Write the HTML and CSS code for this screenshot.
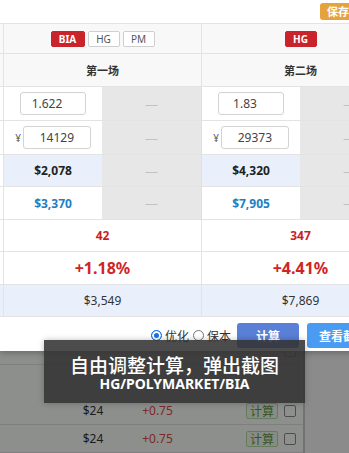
FILE: index.html
```html
<!DOCTYPE html>
<html lang="zh">
<head>
<meta charset="utf-8">
<title>计算</title>
<link rel="stylesheet" href="styles.css">
</head>
<body>
<div class="page">
  <div class="page-main">
    <div class="page-head"></div>
    <div class="prow"><span></span><span></span><span></span><span class="ops"><span class="pchk"></span></span></div>
    <div class="pgroup"></div>
    <div class="prow"><span></span><span class="amt">$24</span><span class="gain">+0.75</span><span class="ops"><span class="pbtn">计算</span><span class="pchk"></span></span></div>
    <div class="prow"><span></span><span class="amt">$24</span><span class="gain">+0.75</span><span class="ops"><span class="pbtn">计算</span><span class="pchk"></span></span></div>
  </div>
  <div class="page-side"></div>
</div>

<div class="mask"></div>

<div class="modal">
  <div class="modal-top"><span class="btn-save">保存方案</span></div>
  <div class="grid">
    <div class="c c0 head"></div>
    <div class="c span head"><div class="badges"><span class="badge on wide">BIA</span><span class="badge">HG</span><span class="badge">PM</span></div></div>
    <div class="c span head"><div class="badges"><span class="badge on">HG</span></div></div>

    <div class="c c0 head"></div>
    <div class="c span head title">第一场</div>
    <div class="c span head title">第二场</div>

    <div class="c c0"></div>
    <div class="c"><span class="inp odds">1.622</span></div>
    <div class="c dash">—</div>
    <div class="c"><span class="inp odds">1.83</span></div>
    <div class="c dash">—</div>

    <div class="c c0"></div>
    <div class="c"><span class="cur">¥</span><span class="inp stake">14129</span></div>
    <div class="c dash">—</div>
    <div class="c"><span class="cur">¥</span><span class="inp stake">29373</span></div>
    <div class="c dash">—</div>

    <div class="c c0"></div>
    <div class="c blue num">$2,078</div>
    <div class="c dash">—</div>
    <div class="c blue num">$4,320</div>
    <div class="c dash">—</div>

    <div class="c c0"></div>
    <div class="c num link">$3,370</div>
    <div class="c dash">—</div>
    <div class="c num link">$7,905</div>
    <div class="c dash">—</div>

    <div class="c c0"></div>
    <div class="c span num red">42</div>
    <div class="c span num red">347</div>

    <div class="c c0"></div>
    <div class="c span num red big">+1.18%</div>
    <div class="c span num red big">+4.41%</div>

    <div class="c c0 blue"></div>
    <div class="c span blue plain">$3,549</div>
    <div class="c span blue plain">$7,869</div>
  </div>
  <div class="foot">
    <div class="opts">
      <span class="opt"><span class="radio on"></span>优化</span>
      <span class="opt"><span class="radio"></span>保本</span>
    </div>
    <span class="btn calc">计算</span>
    <span class="btn view">查看截图</span>
  </div>
</div>

<div class="caption">
  <div class="cap1">自由调整计算，弹出截图</div>
  <div class="cap2">HG/POLYMARKET/BIA</div>
</div>
</body>
</html>
```

FILE: styles.css
```css
* { box-sizing: border-box; margin: 0; padding: 0; }
html, body { width: 349px; height: 453px; overflow: hidden; }
body {
  position: relative;
  font-family: "Noto Sans", "Noto Sans CJK SC", sans-serif;
  color: #333;
  background: #f8f8f8;
}

/* page behind the dialog */
.page { display: flex; height: 100%; }
.page-main {
  width: 305px;
  flex: none;
  background: #fcfff9;
  border-right: 2px solid #cbcbcb;
}
.page-side { flex: 1; background: #f8f8f8; }
.page-head { height: 337px; border-bottom: 1px solid #e2e2e2; }
.pgroup { height: 32px; }
.prow {
  display: grid;
  grid-template-columns: 60px 66px 63px 1fr;
  align-items: center;
  height: 28px;
  border-bottom: 1px solid #e2e2e2;
  font-size: 12px;
}
.prow .amt { text-align: center; color: #333; }
.prow .gain { text-align: center; color: #e24848; }
.prow .ops {
  display: flex;
  justify-content: flex-end;
  align-items: center;
  gap: 6px;
  padding-right: 7px;
}
.pbtn {
  font-family: "Noto Sans CJK SC", sans-serif;
  font-size: 12px;
  line-height: 14px;
  padding: 0 3px;
  border: 1px solid #b6dba4;
  background: #f0f9eb;
  color: #5f9a4a;
  border-radius: 2px;
}
.pchk {
  width: 12px;
  height: 12px;
  border: 1px solid #8a8a8a;
  border-radius: 2px;
  background: #fff;
}

/* dimming layer */
.mask {
  position: absolute;
  inset: 0;
  background: rgba(0, 0, 0, 0.44);
}

/* dialog */
.modal {
  position: absolute;
  top: 0;
  left: 0;
  width: 400px;
  background: #fff;
  box-shadow: 0 2px 6px rgba(0, 0, 0, 0.25);
}
.modal-top {
  height: 23px;
  display: flex;
  justify-content: flex-end;
  align-items: center;
  padding-right: 22px;
}
.btn-save {
  height: 17px;
  padding: 0 7px;
  border-radius: 3px;
  background: #e6a23c;
  color: #fff;
  font: bold 11px/17px "Noto Sans CJK SC", sans-serif;
}

.grid {
  display: grid;
  grid-template-columns: 4px 98px 100px 98px 100px;
  grid-template-rows: 30px 33px 34px 34px 32px 33px 32px 33px 32px;
  border-top: 1px solid #e3e3e3;
}
.c {
  display: flex;
  align-items: center;
  justify-content: center;
  border-bottom: 1px solid #e3e3e3;
  font-size: 12px;
  white-space: nowrap;
}
.c0 { border-right: 1px solid #e3e3e3; }
.span { grid-column: span 2; border-right: 1px solid #e3e3e3; }
.dash {
  background: #e7e7e7;
  border-right: 1px solid #e0e0e0;
  color: #c2c2c2;
  font-size: 13px;
}
.head { background: #f8f8f8; }
.blue { background: #e9f0fc; }
.title {
  font-family: "Noto Sans CJK SC", sans-serif;
  font-size: 11px;
  font-weight: 700;
  color: #333;
}

.badges { display: flex; gap: 3px; }
.badge {
  display: flex;
  align-items: center;
  justify-content: center;
  width: 32px;
  height: 16px;
  border: 1px solid #cfcfcf;
  border-radius: 2px;
  background: #fff;
  color: #555;
  font-size: 10px;
}
.badge.wide { width: 34px; }
.badge.on {
  background: #c9242b;
  border-color: #c9242b;
  color: #fff;
  font-weight: 700;
}

.inp {
  display: flex;
  align-items: center;
  justify-content: center;
  height: 23px;
  border: 1px solid #d3d3d3;
  border-radius: 3px;
  background: #fff;
  color: #444;
  font-size: 12px;
}
.inp.odds { width: 66px; padding-right: 12px; }
.inp.stake { width: 68px; }
.cur { font-size: 10px; color: #555; margin-right: 2px; }

.num { font-weight: 700; color: #222; }
.link { color: #1c80c4; }
.red { color: #cb1f1f; }
.big { font-size: 16px; color: #d02525; }
.plain { font-weight: 400; color: #333; }

.foot {
  height: 34px;
  display: flex;
  justify-content: flex-end;
  align-items: flex-start;
  gap: 8px;
  padding: 6px 21px 0 0;
}
.opts {
  display: flex;
  align-items: center;
  gap: 4px;
  height: 25px;
  margin-right: -2px;
  font-family: "Noto Sans CJK SC", sans-serif;
  font-size: 12px;
  color: #333;
}
.opt { display: flex; align-items: center; gap: 3px; }
.radio {
  width: 11px;
  height: 11px;
  border: 1px solid #767676;
  border-radius: 50%;
  background: #fff;
}
.radio.on {
  border-color: #1971e8;
  background: #1971e8;
  box-shadow: inset 0 0 0 2px #fff;
}
.btn {
  height: 25px;
  border-radius: 3px;
  color: #fff;
  text-align: center;
  font: 700 12px/25px "Noto Sans CJK SC", sans-serif;
}
.btn.calc { width: 62px; background: #5a7fd7; }
.btn.view { width: 72px; background: #4a9bf2; }

/* caption banner over the screenshot */
.caption {
  position: absolute;
  left: 44px;
  top: 340px;
  width: 261px;
  height: 63px;
  padding-top: 14px;
  background: rgba(51, 51, 51, 0.88);
  box-shadow: 0 0 6px rgba(0, 0, 0, 0.25);
  color: #fff;
  text-align: center;
}
.cap1 {
  font-family: "Noto Sans CJK SC", sans-serif;
  font-size: 19px;
  line-height: 21px;
  font-weight: 500;
}
.cap2 {
  margin-top: 1px;
  font-size: 14px;
  line-height: 16px;
  font-weight: 700;
}
```
